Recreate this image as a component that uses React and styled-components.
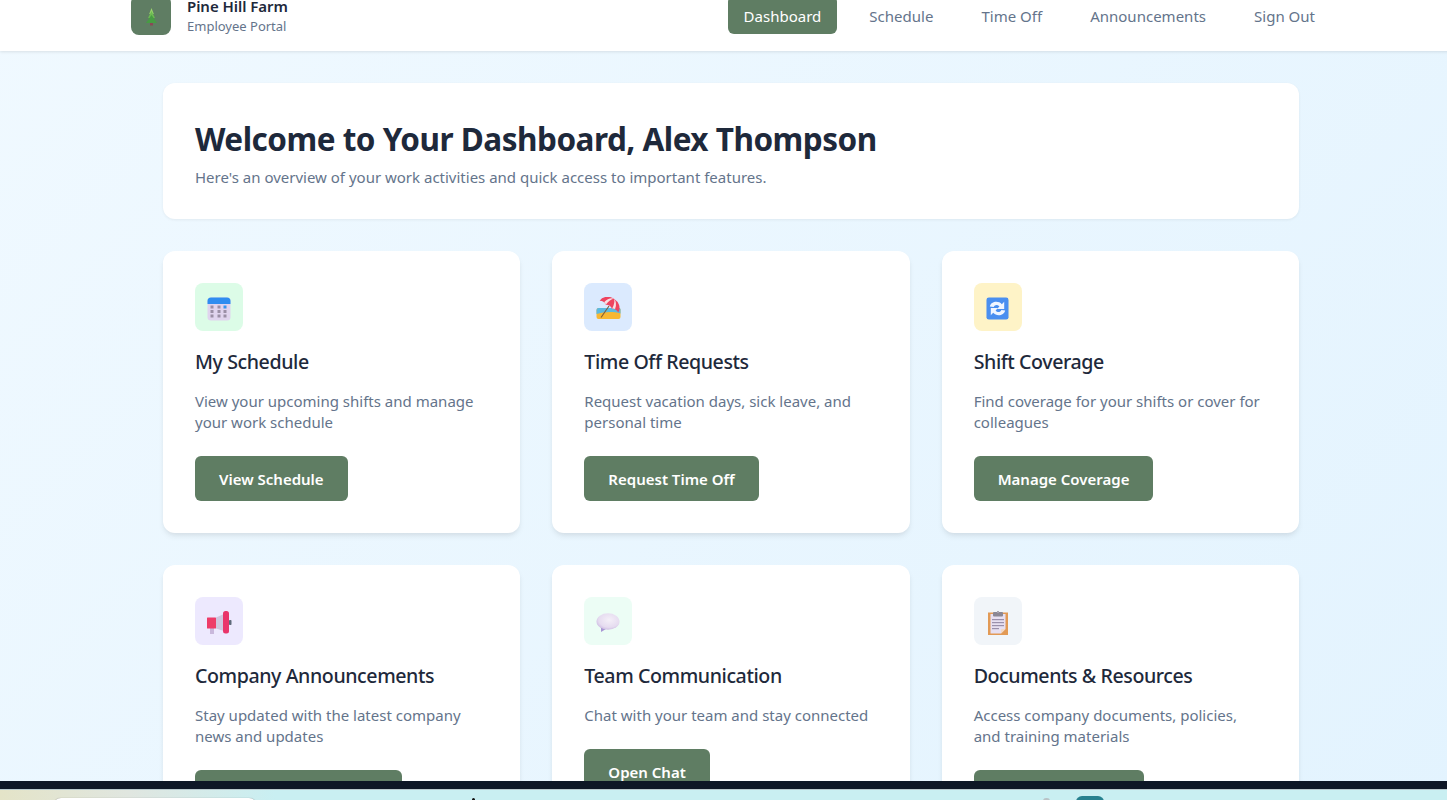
import React from 'react';
import styled, { createGlobalStyle } from 'styled-components';

const Global = createGlobalStyle`
  html, body { margin: 0; padding: 0; height: 100%; overflow: hidden; }
  body { font-family: "Noto Sans", "Open Sans", sans-serif; }
  * { box-sizing: border-box; }
`;
const Viewport = styled.div`
  display: flex; flex-direction: column; width: 1447px; height: 800px; overflow: hidden;
`;
const Scroller = styled.div`
  height: 781px; overflow: hidden; flex: none;
`;
const Page = styled.div`
  width: 1462px; margin-top: -21px; min-height: 1300px;
  background: linear-gradient(135deg, #f0f9ff 0%, #e0f2fe 100%);
`;
const Header = styled.header`
  background: #fff; box-shadow: 0 1px 3px rgba(0,0,0,.1);
`;
const HeaderInner = styled.div`
  width: 1200px; margin: 0 auto; padding: 16px 0; height: 72px;
  display: flex; align-items: center; justify-content: space-between;
`;
const Brand = styled.div`display: flex; align-items: center; gap: 16px;`;
const Logo = styled.div`
  width: 40px; height: 40px; border-radius: 8px; background: #5f7d63; padding-top: 4px;
  display: flex; align-items: center; justify-content: center;
`;
const BrandText = styled.div`display: flex; flex-direction: column; padding-top: 1px;`;
const BrandName = styled.div`
  font-size: 15px; font-weight: 600; line-height: 20px; color: #1e293b; letter-spacing: -.05px;
`;
const BrandSub = styled.div`
  font-size: 13px; line-height: 20px; color: #64748b; letter-spacing: 0;
`;
const Nav = styled.nav`display: flex; gap: 16px; margin-top: -1px;`;
const NavLink = styled.a`
  display: block; height: 38px; line-height: 40px; padding: 0 16px; border-radius: 6px;
  font-size: 15px; letter-spacing: .01px;
  background: ${p => p.$active ? '#5f7d63' : 'transparent'};
  color: ${p => p.$active ? '#fff' : '#64748b'};
`;
const Main = styled.main`
  width: 1200px; margin: 0 auto; padding: 32px;
`;
const Welcome = styled.section`
  background: #fff; border-radius: 12px; padding: 32px; height: 136px; margin-bottom: 32px;
  box-shadow: 0 1px 3px rgba(0,0,0,.06);
`;
const Title = styled.h1`
  margin: 0 0 4px; font-size: 31.5px; font-weight: 700; line-height: 48px; color: #1e293b; letter-spacing: -.5px;
`;
const Subtitle = styled.p`
  margin: 0; font-size: 15px; line-height: 20px; color: #64748b; letter-spacing: 0;
`;
const Grid = styled.div`
  display: grid; grid-template-columns: repeat(3, 1fr); gap: 32px;
`;
const Card = styled.article`
  background: #fff; border-radius: 12px; padding: 32px; display: flex; flex-direction: column; align-items: flex-start;
  box-shadow: 0 4px 6px -1px rgba(0,0,0,.08), 0 2px 4px -1px rgba(0,0,0,.04);
`;
const IconBox = styled.div`
  width: 48px; height: 48px; border-radius: 8px; background: ${p => p.$bg}; padding-top: 3px;
  display: flex; align-items: center; justify-content: center; margin-bottom: 16px;
`;
const CardTitle = styled.h3`
  margin: 0 0 14px; font-size: 19.6px; font-weight: 500; line-height: 30px; color: #1e293b; letter-spacing: -.42px;
`;
const CardText = styled.p`
  margin: 0 0 23px; font-size: 15px; line-height: 21px; color: #64748b; letter-spacing: 0;
`;
const Button = styled.a`
  display: block; height: 45px; line-height: 47px; padding: 0 24px; border-radius: 6px; background: #5f7d63; color: #fff;
  font-size: 15px; font-weight: 600; letter-spacing: 0;
`;
const BlackBar = styled.div`height: 8px; flex: none; background: #0e1726;`;
const Taskbar = styled.div`
  height: 11px; flex: none; position: relative;
  border-top: 1px solid #b8c8cc;
  background: linear-gradient(90deg, #e4e4c8 0%, #e0e6e0 9%, #c9eff2 19%, #c9eff2 100%);
`;
const SearchBox = styled.div`
  position: absolute; left: 53px; top: 8px; width: 204px; height: 10px; background: #fff; border-radius: 8px 8px 0 0;
  box-shadow: 0 0 1px rgba(0,0,0,.4);
`;
const TaskDot = styled.div`
  position: absolute; left: 472px; top: 8px; width: 3px; height: 3px; border-radius: 2px; background: #111;
`;
const TaskGrey = styled.div`
  position: absolute; left: 1043px; top: 8px; width: 7px; height: 3px; border-radius: 4px 4px 0 0; background: #b9c3c6;
`;
const TaskTeal = styled.div`
  position: absolute; left: 1076px; top: 6px; width: 28px; height: 6px; border-radius: 6px 6px 0 0; background: #26818f;
`;

const Tree = () => (
  <svg width="13" height="18" viewBox="0 0 13 18">
    <rect x="5" y="14.5" width="3" height="3" fill="#8a4a55" />
    <path d="M6.5 0 L8.8 6 H4.2Z" fill="#9ad56c" />
    <path d="M6.5 3 L10 10 H3Z" fill="#6cbb52" />
    <path d="M6.5 7 L12 15 H1Z" fill="#479c44" />
  </svg>
);
const CalendarIcon = () => (
  <svg width="24" height="24" viewBox="0 0 24 24">
    <rect x="0.5" y="0.5" width="23" height="23" rx="3.5" fill="#e0d4ee" />
    <path d="M0.5 7 V4 a3.5 3.5 0 0 1 3.5-3.5 h16 a3.5 3.5 0 0 1 3.5 3.5 V7Z" fill="#2f8df0" />
    {[5, 12, 18].map(x => [10, 14.5, 19].map(y => (
      <rect key={x + '-' + y} x={x - 1.5} y={y - 1.5} width="3" height="3" fill={x === 18 && y === 10 ? '#3a94ec' : '#9b8fa6'} />
    )))}
  </svg>
);
const UmbrellaIcon = () => (
  <svg width="25" height="23" viewBox="0 0 25 23">
    <path d="M0.5 13 a2 2 0 0 1 2-2 H23 a1.5 1.5 0 0 1 1.5 1.5 V20 a2 2 0 0 1-2 2 H2.5 a2 2 0 0 1-2-2Z" fill="#f7b733" />
    <path d="M0.5 13 a2 2 0 0 1 2-2 H23 a1.5 1.5 0 0 1 1.5 1.5 V16.5 C16 14 8 15 0.5 17Z" fill="#5cb9e0" />
    <path d="M5 20.5 L13 9" stroke="#7f5a3a" strokeWidth="1.1" />
    <g transform="rotate(32 14 8)">
      <path d="M3 10 A11 9.5 0 0 1 25 10 Q21.3 7.6 17.7 10 Q14 7.6 10.3 10 Q6.6 7.6 3 10Z" fill="#ee4460" />
      <path d="M14 0.5 Q9 2 7.5 8.8 Q9 9 10.3 10 Q10.8 3 14 0.5Z" fill="#f8e0e4" />
      <path d="M14 0.5 Q19 2 20.5 8.8 Q19 9 17.7 10 Q17.2 3 14 0.5Z" fill="#f8e0e4" />
    </g>
  </svg>
);
const RefreshIcon = () => (
  <svg width="23" height="23" viewBox="0 0 24 24">
    <rect x="0.5" y="0.5" width="23" height="23" rx="2.5" fill="#4a8ff0" />
    <path d="M4 10 C5 4.5 13 3.5 16.5 7.5 L19 5 V12.5 H11.5 L14 10 C12 7.5 9 8 8 10.5Z" fill="#f1f6ff" />
    <path d="M20 14 C19 19.5 11 20.5 7.5 16.5 L5 19 V11.5 H12.5 L10 14 C12 16.5 15 16 16 13.5Z" fill="#f1f6ff" />
  </svg>
);
const MegaphoneIcon = () => (
  <svg width="25" height="23" viewBox="0 0 25 23">
    <rect x="3" y="17" width="4" height="6" fill="#c9b8dc" />
    <rect x="0" y="6.5" width="9" height="11" rx="0.5" fill="#ee3c68" />
    <path d="M9 6.5 L17 3 V20 L9 17.5Z" fill="#cfc6de" />
    <rect x="16" y="0" width="6" height="22.5" rx="2.5" fill="#e9356a" />
    <rect x="22" y="9" width="2.5" height="5" rx="0.8" fill="#5f6a7a" />
  </svg>
);
const BubbleIcon = () => (
  <svg width="24" height="20" viewBox="0 0 24 20">
    <defs>
      <radialGradient id="bub" cx="55%" cy="40%" r="65%">
        <stop offset="0%" stopColor="#f4eff8" />
        <stop offset="70%" stopColor="#e6dcf0" />
        <stop offset="100%" stopColor="#c9b6e0" />
      </radialGradient>
    </defs>
    <path d="M5 14 L5 19 L10 16Z" fill="#a997d4" />
    <ellipse cx="12" cy="8.5" rx="11.5" ry="8.2" fill="url(#bub)" />
  </svg>
);
const ClipboardIcon = () => (
  <svg width="20" height="24" viewBox="0 0 20 24">
    <rect x="0" y="1.5" width="20" height="22.5" fill="#e29a56" />
    <path d="M2.5 3 H17.5 V18 L13 22.5 H2.5Z" fill="#e7e0f2" />
    <path d="M13 22.5 L13 19 Q13 18 14 18 H17.5Z" fill="#f4d8c2" />
    <rect x="5" y="1" width="10" height="4.5" rx="1" fill="#8b8794" />
    <rect x="9" y="0" width="2" height="2" fill="#a8a4b0" />
    <rect x="4" y="8" width="12" height="1.2" fill="#9a90ac" />
    <rect x="4" y="11" width="12" height="1.2" fill="#9a90ac" />
    <rect x="4" y="14" width="12" height="1.2" fill="#9a90ac" />
    <rect x="4" y="17" width="7" height="1.2" fill="#9a90ac" />
  </svg>
);

const cards = [
  { icon: <CalendarIcon />, bg: '#dcfce7', title: 'My Schedule', text: 'View your upcoming shifts and manage your work schedule', btn: 'View Schedule' },
  { icon: <UmbrellaIcon />, bg: '#dbeafe', title: 'Time Off Requests', text: 'Request vacation days, sick leave, and personal time', btn: 'Request Time Off' },
  { icon: <RefreshIcon />, bg: '#fef3c7', title: 'Shift Coverage', text: 'Find coverage for your shifts or cover for colleagues', btn: 'Manage Coverage' },
  { icon: <MegaphoneIcon />, bg: '#ede9fe', title: 'Company Announcements', text: 'Stay updated with the latest company news and updates', btn: 'View Announcements' },
  { icon: <BubbleIcon />, bg: '#ecfdf5', title: 'Team Communication', text: 'Chat with your team and stay connected', btn: 'Open Chat' },
  { icon: <ClipboardIcon />, bg: '#f1f5f9', title: 'Documents & Resources', text: 'Access company documents, policies, and training materials', btn: 'View Documents' },
];
const links = [['Dashboard', true], ['Schedule', false], ['Time Off', false], ['Announcements', false], ['Sign Out', false]];

export default function App() {
  return (
    <Viewport>
      <Global />
      <Scroller>
        <Page>
          <Header>
            <HeaderInner>
              <Brand>
                <Logo><Tree /></Logo>
                <BrandText>
                  <BrandName>Pine Hill Farm</BrandName>
                  <BrandSub>Employee Portal</BrandSub>
                </BrandText>
              </Brand>
              <Nav>
                {links.map(([l, a]) => <NavLink key={l} $active={a}>{l}</NavLink>)}
              </Nav>
            </HeaderInner>
          </Header>
          <Main>
            <Welcome>
              <Title>Welcome to Your Dashboard, Alex Thompson</Title>
              <Subtitle>Here's an overview of your work activities and quick access to important features.</Subtitle>
            </Welcome>
            <Grid>
              {cards.map(c => (
                <Card key={c.title}>
                  <IconBox $bg={c.bg}>{c.icon}</IconBox>
                  <CardTitle>{c.title}</CardTitle>
                  <CardText>{c.text}</CardText>
                  <Button>{c.btn}</Button>
                </Card>
              ))}
            </Grid>
          </Main>
        </Page>
      </Scroller>
      <BlackBar />
      <Taskbar>
        <SearchBox />
        <TaskDot />
        <TaskGrey />
        <TaskTeal />
      </Taskbar>
    </Viewport>
  );
}
